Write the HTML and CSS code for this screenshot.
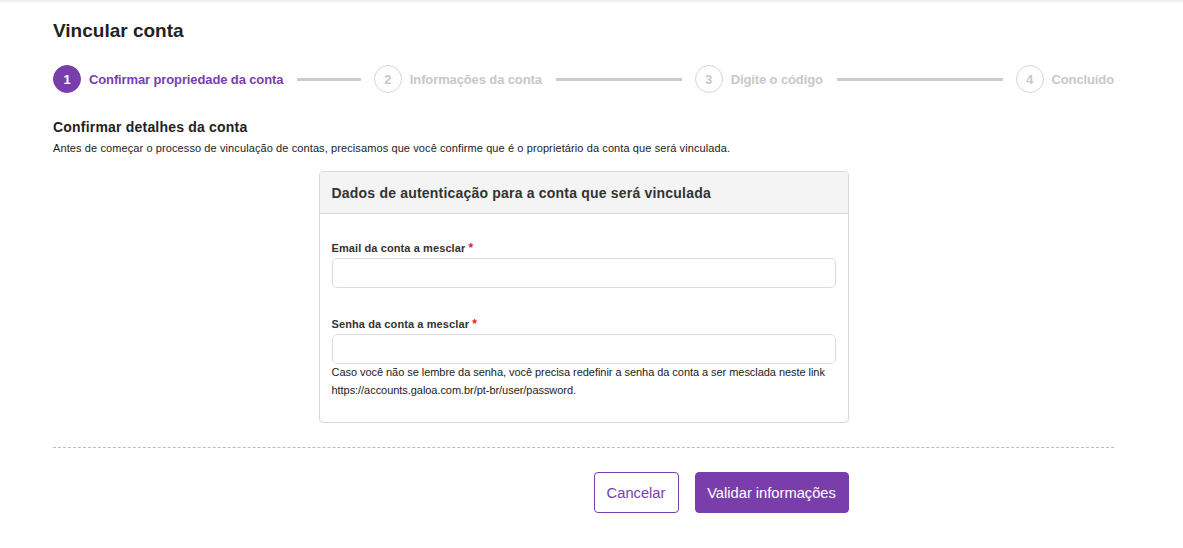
FILE: index.html
```html
<!DOCTYPE html>
<html lang="pt-BR">
<head>
<meta charset="utf-8">
<title>Vincular conta</title>
<link rel="stylesheet" href="styles.css">
</head>
<body>
<div class="topshade"></div>
<main class="page">
  <h1 class="title">Vincular conta</h1>
  <ol class="stepper">
    <li class="step active"><span class="num">1</span><span class="label">Confirmar propriedade da conta</span><span class="line"></span></li>
    <li class="step"><span class="num">2</span><span class="label">Informações da conta</span><span class="line"></span></li>
    <li class="step"><span class="num">3</span><span class="label">Digite o código</span><span class="line"></span></li>
    <li class="step last"><span class="num">4</span><span class="label">Concluído</span></li>
  </ol>
  <h2 class="section-title">Confirmar detalhes da conta</h2>
  <p class="intro">Antes de começar o processo de vinculação de contas, precisamos que você confirme que é o proprietário da conta que será vinculada.</p>
  <section class="card">
    <div class="card-head">Dados de autenticação para a conta que será vinculada</div>
    <div class="card-body">
      <label class="field-label">Email da conta a mesclar <span class="req">*</span></label>
      <input class="input" type="text">
      <label class="field-label second">Senha da conta a mesclar <span class="req">*</span></label>
      <input class="input" type="password">
      <p class="help">Caso você não se lembre da senha, você precisa redefinir a senha da conta a ser mesclada neste link https://accounts.galoa.com.br/pt-br/user/password.</p>
    </div>
  </section>
  <hr class="divider">
  <div class="actions">
    <button class="btn btn-outline">Cancelar</button>
    <button class="btn btn-primary">Validar informações</button>
  </div>
</main>
</body>
</html>
```

FILE: styles.css
```css
* { box-sizing: border-box; }
html, body { margin: 0; padding: 0; background: #fff; }
body {
  font-family: "Liberation Sans", Arial, sans-serif;
  color: #222;
  position: relative;
}
.topshade {
  position: absolute;
  top: 0; left: 0; right: 0;
  height: 4px;
  background: linear-gradient(#ececec, rgba(255,255,255,0));
}
.page {
  width: 1061px;
  margin: 0 0 0 53px;
  padding-top: 19px;
}
.title {
  margin: 0;
  font-size: 19px;
  line-height: 23px;
  font-weight: bold;
  color: #222;
}
.stepper {
  list-style: none;
  margin: 23px 0 0;
  padding: 0;
  display: flex;
  align-items: center;
  height: 28px;
}
.step {
  flex: 1;
  display: flex;
  align-items: center;
  margin-right: 13px;
}
.step.last { flex: 0 0 auto; margin-right: 0; }
.num {
  width: 28px; height: 28px;
  border-radius: 50%;
  border: 1.5px solid #d6d6d6;
  color: #c8c8c8;
  display: flex;
  align-items: center;
  justify-content: center;
  font-size: 13px;
  font-weight: bold;
  flex: 0 0 auto;
}
.label {
  margin-left: 8px;
  font-size: 13px;
  font-weight: bold;
  color: #c8c8c8;
  white-space: nowrap;
  letter-spacing: -0.12px;
}
.line {
  flex: 1;
  height: 3px;
  background: #cccccc;
  margin-left: 14px;
}
.step.active .num { background: #7a3eac; border-color: #7a3eac; color: #fff; }
.step.active .label { color: #7a3eac; }
.section-title {
  margin: 25px 0 0;
  font-size: 14px;
  line-height: 18px;
  font-weight: bold;
  color: #222;
  letter-spacing: 0.2px;
}
.intro {
  margin: 5px 0 0;
  font-size: 11px;
  line-height: 14px;
  color: #222;
  letter-spacing: 0.1px;
}
.card {
  width: 530px;
  margin: 16px auto 0;
  border: 1px solid #d9d9d9;
  border-radius: 4px;
  overflow: hidden;
}
.card-head {
  background: #f4f4f4;
  border-bottom: 1px solid #d9d9d9;
  height: 42px;
  padding: 0 12px;
  display: flex;
  align-items: center;
  font-size: 14px;
  font-weight: bold;
  color: #333;
  letter-spacing: 0.2px;
}
.card-body {
  padding: 27px 12px 23px;
}
.field-label {
  display: block;
  font-size: 11px;
  line-height: 14px;
  font-weight: bold;
  color: #333;
  margin-bottom: 3px;
  letter-spacing: 0.1px;
}
.field-label.second { margin-top: 29px; }
.req { color: #e0212b; font-size: 12px; }
.input {
  display: block;
  width: 100%;
  height: 30px;
  border: 1px solid #dcdcdc;
  border-radius: 5px;
  background: #fff;
  font: inherit;
  padding: 0 10px;
  margin: 0;
}
.help {
  margin: -1px 0 0;
  font-size: 11px;
  line-height: 18px;
  color: #222;
  letter-spacing: -0.05px;
}
.divider {
  border: 0;
  border-top: 1px dashed #bdbdbd;
  margin: 24px 0 0;
}
.actions {
  width: 530px;
  margin: 24px auto 0;
  display: flex;
  justify-content: flex-end;
  gap: 16px;
}
.btn {
  height: 41px;
  border-radius: 4px;
  font-family: "Liberation Sans", Arial, sans-serif;
  font-size: 14.7px;
  padding: 0;
  white-space: nowrap;
  cursor: pointer;
}
.btn-outline {
  background: #fff;
  border: 1px solid #7a3eac;
  color: #7a3eac;
  width: 85px;
}
.btn-primary {
  background: #7a3eac;
  border: 1px solid #7a3eac;
  color: #fff;
  width: 154px;
}
```
